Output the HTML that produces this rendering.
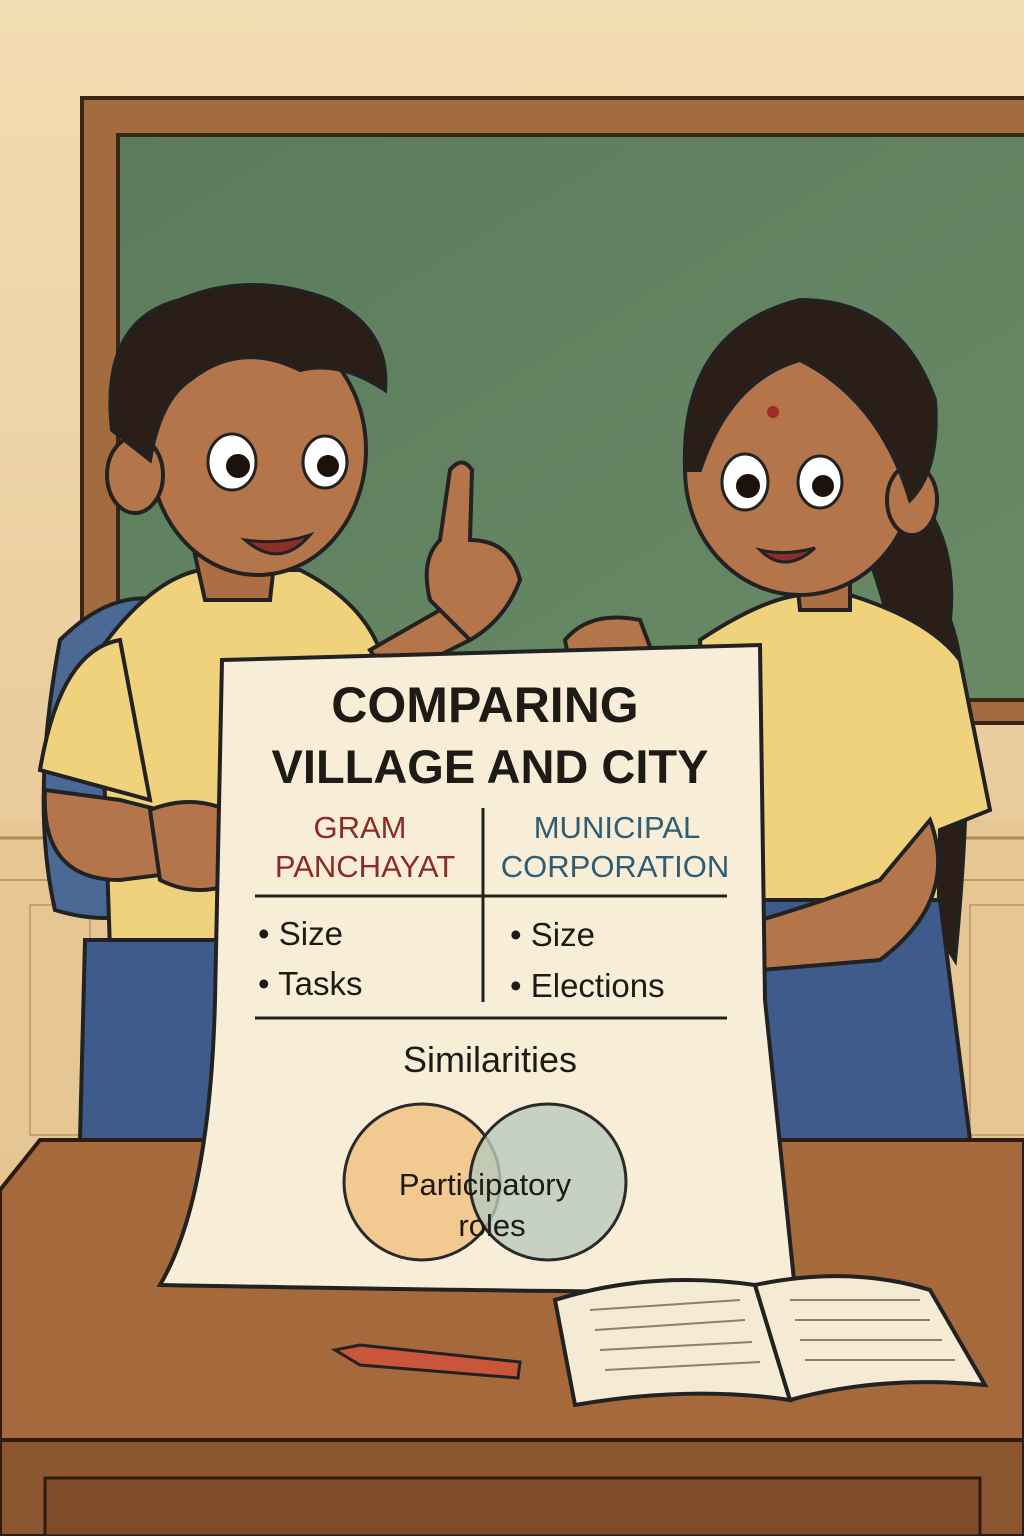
<!DOCTYPE html>
<html><head><meta charset="utf-8"><style>
html,body{margin:0;padding:0;width:1024px;height:1536px;overflow:hidden;background:#efd3a5}
svg{display:block}
text{font-family:"Liberation Sans","DejaVu Sans",sans-serif}
</style></head><body>
<svg width="1024" height="1536" viewBox="0 0 1024 1536" xmlns="http://www.w3.org/2000/svg">
<defs>
<linearGradient id="wall" x1="0" y1="0" x2="0" y2="1"><stop offset="0" stop-color="#f2dcb3"/><stop offset="1" stop-color="#e3bd87"/></linearGradient>
<linearGradient id="board" x1="0" y1="0" x2="1" y2="1"><stop offset="0" stop-color="#5b7c5c"/><stop offset="1" stop-color="#6a8a66"/></linearGradient>
</defs>
<rect width="1024" height="1536" fill="url(#wall)"/>
<!-- wainscot -->
<rect x="0" y="820" width="1024" height="330" fill="#e6c693"/>
<line x1="0" y1="838" x2="1024" y2="838" stroke="#b48a5a" stroke-width="3"/>
<line x1="0" y1="880" x2="1024" y2="880" stroke="#c49b6a" stroke-width="2"/>
<rect x="30" y="905" width="60" height="230" fill="none" stroke="#c9a273" stroke-width="2"/>
<rect x="970" y="905" width="60" height="230" fill="none" stroke="#c9a273" stroke-width="2"/>
<!-- chalkboard -->
<rect x="82" y="98" width="960" height="625" fill="#a36c3e" stroke="#3a2616" stroke-width="4"/>
<rect x="118" y="135" width="920" height="565" fill="url(#board)" stroke="#3a2616" stroke-width="4"/>
<!-- boy backpack -->
<path d="M60 640 Q110 590 160 600 L175 900 Q120 930 55 910 Q30 800 60 640Z" fill="#4a6a95" stroke="#222" stroke-width="4"/>
<path d="M300 600 Q330 610 340 650 L320 660 Z" fill="#4a6a95" stroke="#222" stroke-width="4"/>
<!-- boy body -->
<path d="M100 650 Q150 580 200 570 L300 570 Q360 600 380 650 L370 950 L110 950 Z" fill="#f1d27c" stroke="#222" stroke-width="4"/>
<path d="M40 770 Q60 650 120 640 L150 800 Z" fill="#f1d27c" stroke="#222" stroke-width="4"/>
<path d="M45 790 Q40 880 120 880 L200 870 L200 820 L120 800 Z" fill="#b5754a" stroke="#222" stroke-width="4"/>
<path d="M85 940 L230 940 L225 1140 L80 1140 Z" fill="#3e5b8b" stroke="#222" stroke-width="4"/>
<path d="M150 810 Q200 790 245 820 L240 880 Q200 900 160 880 Z" fill="#b5754a" stroke="#222" stroke-width="4"/>
<!-- boy head -->
<path d="M195 555 L205 600 L270 600 L275 555Z" fill="#ad6e44" stroke="#222" stroke-width="4"/>
<ellipse cx="258" cy="450" rx="108" ry="125" fill="#b5754a" stroke="#222" stroke-width="4"/>
<ellipse cx="135" cy="475" rx="28" ry="38" fill="#b5754a" stroke="#222" stroke-width="4"/>
<path d="M112 430 Q100 320 180 300 Q250 270 330 300 Q390 330 385 390 Q340 360 300 370 Q240 340 190 380 Q160 400 150 460 Z" fill="#2a1e17" stroke="#222" stroke-width="4"/>
<ellipse cx="232" cy="462" rx="24" ry="28" fill="#fff" stroke="#222" stroke-width="3"/>
<circle cx="238" cy="466" r="12" fill="#1c120c"/>
<ellipse cx="325" cy="462" rx="22" ry="26" fill="#fff" stroke="#222" stroke-width="3"/>
<circle cx="328" cy="466" r="11" fill="#1c120c"/>
<path d="M245 540 Q280 570 310 535 Q280 545 245 540Z" fill="#8a2f2a" stroke="#222" stroke-width="3"/>
<!-- boy raised hand -->
<path d="M430 600 Q420 560 440 540 L450 470 Q462 455 472 470 L470 540 Q510 540 520 580 Q505 620 470 640 Z" fill="#b5754a" stroke="#222" stroke-width="4"/>
<path d="M370 650 L440 610 L470 640 L390 680Z" fill="#b5754a" stroke="#222" stroke-width="4"/>
<!-- girl -->
<path d="M890 470 Q960 520 950 620 Q980 700 955 960 L930 920 Q920 700 870 560Z" fill="#2a1e17" stroke="#222" stroke-width="4"/>
<path d="M700 640 Q760 600 800 595 L850 595 Q930 620 960 660 L990 810 L940 830 L935 1140 L720 1140 Z" fill="#f1d27c" stroke="#222" stroke-width="4"/>
<path d="M740 900 L940 900 L970 1140 L730 1140 Z" fill="#3e5b8b" stroke="#222" stroke-width="4"/>
<path d="M930 820 Q960 900 880 960 L760 970 L725 930 Q800 910 880 880 Z" fill="#b5754a" stroke="#222" stroke-width="4"/>
<path d="M795 560 L800 610 L850 610 L850 560Z" fill="#ad6e44" stroke="#222" stroke-width="4"/>
<ellipse cx="800" cy="470" rx="115" ry="125" fill="#b5754a" stroke="#222" stroke-width="4"/>
<ellipse cx="912" cy="500" rx="25" ry="35" fill="#b5754a" stroke="#222" stroke-width="4"/>
<path d="M685 470 Q680 330 800 300 Q900 300 935 400 Q940 470 910 500 Q880 400 800 360 Q730 380 700 470Z" fill="#2a1e17" stroke="#222" stroke-width="4"/>
<circle cx="773" cy="412" r="6" fill="#a02a2a"/>
<ellipse cx="745" cy="482" rx="23" ry="28" fill="#fff" stroke="#222" stroke-width="3"/>
<circle cx="748" cy="486" r="12" fill="#1c120c"/>
<ellipse cx="820" cy="482" rx="22" ry="26" fill="#fff" stroke="#222" stroke-width="3"/>
<circle cx="823" cy="486" r="11" fill="#1c120c"/>
<path d="M760 550 Q785 575 815 548 Q785 556 760 550Z" fill="#8a2f2a" stroke="#222" stroke-width="3"/>
<path d="M565 640 Q590 610 640 620 L655 660 L570 665Z" fill="#b5754a" stroke="#222" stroke-width="4"/>
<!-- desk -->
<path d="M0 1190 L40 1140 L1024 1140 L1024 1440 L0 1440Z" fill="#a5693b" stroke="#2e1c10" stroke-width="4"/>
<rect x="0" y="1440" width="1024" height="96" fill="#8c5630" stroke="#2e1c10" stroke-width="4"/>
<rect x="45" y="1478" width="935" height="58" fill="#7e4c2a" stroke="#2e1c10" stroke-width="3"/>
<!-- poster -->
<path d="M222 660 L760 645 L765 1000 L795 1290 Q700 1295 160 1285 Q210 1200 215 1000 Z" fill="#f8edd6" stroke="#222" stroke-width="4"/>
<text x="485" y="722" font-size="50" font-weight="bold" text-anchor="middle" fill="#1e1a16">COMPARING</text>
<text x="490" y="783" font-size="47" font-weight="bold" text-anchor="middle" fill="#1e1a16">VILLAGE AND CITY</text>
<text x="360" y="838" font-size="31" text-anchor="middle" fill="#8b2b27">GRAM</text>
<text x="365" y="877" font-size="31" text-anchor="middle" fill="#8b2b27">PANCHAYAT</text>
<text x="617" y="838" font-size="31" text-anchor="middle" fill="#2f5d73">MUNICIPAL</text>
<text x="615" y="877" font-size="31" text-anchor="middle" fill="#2f5d73">CORPORATION</text>
<line x1="483" y1="808" x2="483" y2="1002" stroke="#222" stroke-width="3"/>
<line x1="255" y1="896" x2="727" y2="896" stroke="#222" stroke-width="3"/>
<line x1="255" y1="1018" x2="727" y2="1018" stroke="#222" stroke-width="3"/>
<text x="258" y="945" font-size="33" fill="#1e1a16">• Size</text>
<text x="258" y="995" font-size="33" fill="#1e1a16">• Tasks</text>
<text x="510" y="946" font-size="33" fill="#1e1a16">• Size</text>
<text x="510" y="997" font-size="33" fill="#1e1a16">• Elections</text>
<text x="490" y="1072" font-size="36" text-anchor="middle" fill="#1e1a16">Similarities</text>
<circle cx="422" cy="1182" r="78" fill="#f0c48a" fill-opacity="0.9" stroke="#2a2a2a" stroke-width="3"/>
<circle cx="548" cy="1182" r="78" fill="#b9c9bd" fill-opacity="0.8" stroke="#2a2a2a" stroke-width="3"/>
<text x="485" y="1195" font-size="31" text-anchor="middle" fill="#1e1a16">Participatory</text>
<text x="492" y="1236" font-size="31" text-anchor="middle" fill="#1e1a16">roles</text>
<!-- book -->
<path d="M555 1300 Q650 1270 755 1285 L790 1400 Q690 1385 575 1405 Z" fill="#f5ead3" stroke="#222" stroke-width="4"/>
<path d="M755 1285 Q850 1265 930 1290 L985 1385 Q880 1375 790 1400 Z" fill="#f5ead3" stroke="#222" stroke-width="4"/>
<g stroke="#8a8070" stroke-width="2">
<line x1="590" y1="1310" x2="740" y2="1300"/><line x1="595" y1="1330" x2="745" y2="1320"/><line x1="600" y1="1350" x2="752" y2="1342"/><line x1="605" y1="1370" x2="760" y2="1362"/>
<line x1="790" y1="1300" x2="920" y2="1300"/><line x1="795" y1="1320" x2="930" y2="1320"/><line x1="800" y1="1340" x2="942" y2="1340"/><line x1="805" y1="1360" x2="955" y2="1360"/>
</g>
<!-- pencil -->
<path d="M335 1350 L360 1345 L520 1362 L518 1378 L360 1365 Z" fill="#c9553a" stroke="#222" stroke-width="3"/>
</svg>
</body></html>
